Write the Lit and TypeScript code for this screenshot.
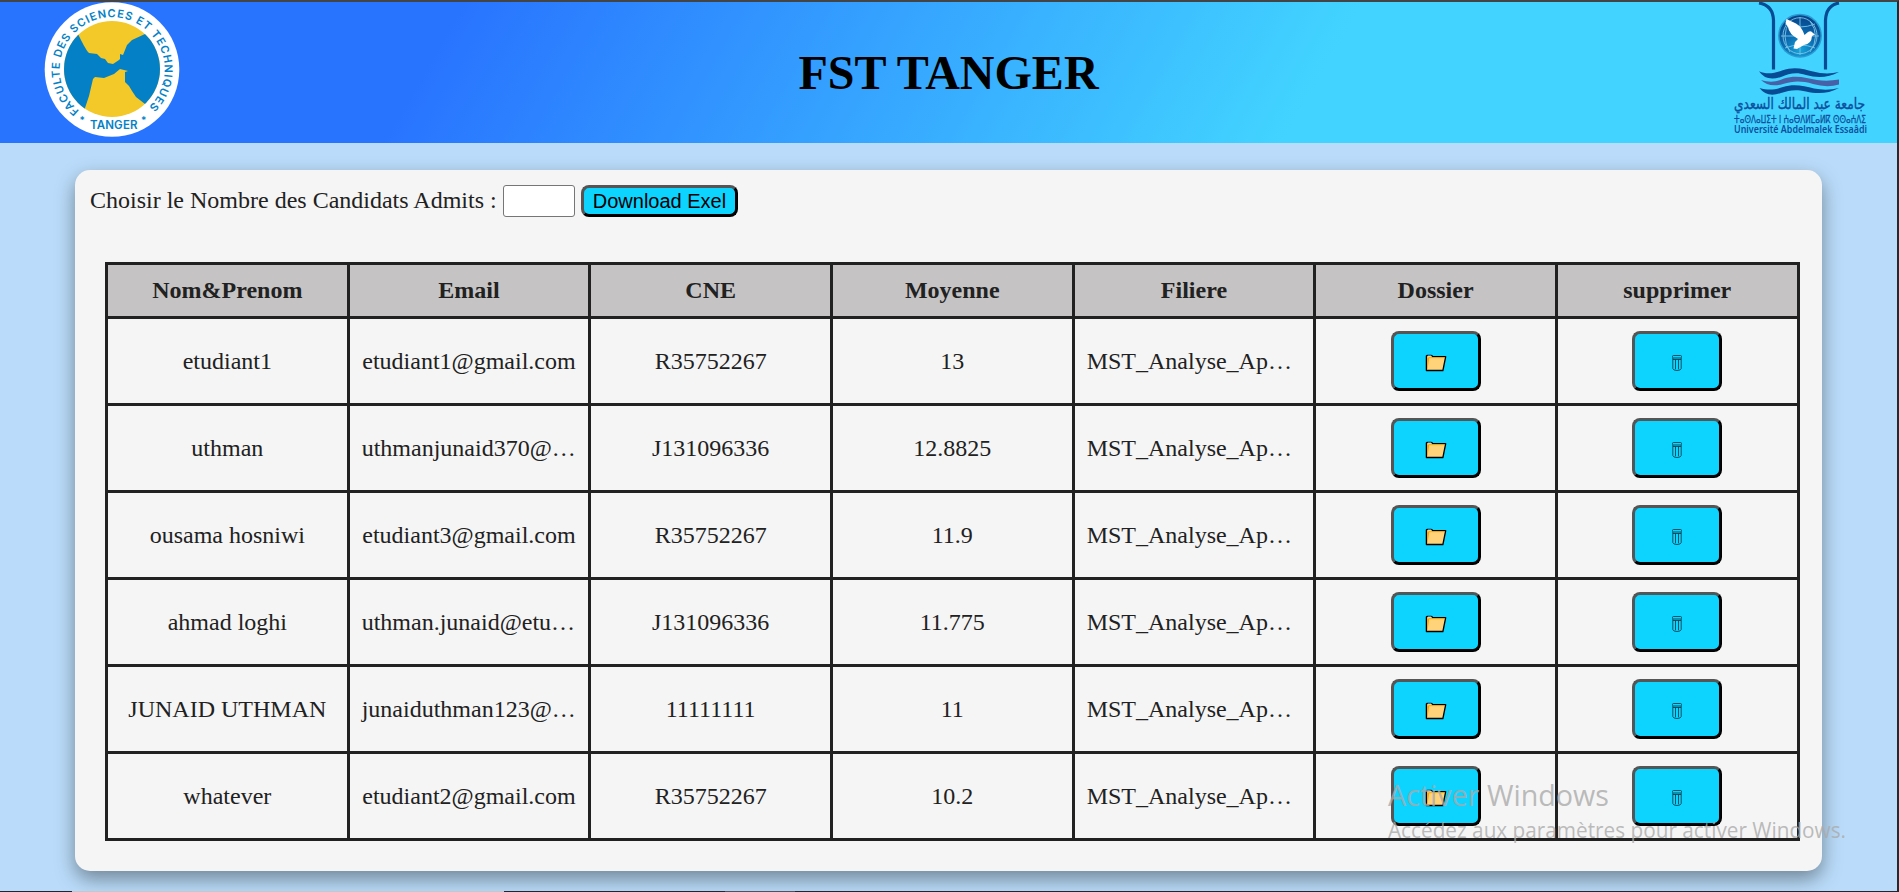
import { LitElement, html, css, svg } from "lit";
import { customElement } from "lit/decorators.js";

interface Candidate {
  name: string;
  email: string;
  cne: string;
  average: string;
  track: string;
}

const TRACK = "MST_Analyse_Appliquee";

const CANDIDATES: Candidate[] = [
  { name: "etudiant1", email: "etudiant1@gmail.com", cne: "R35752267", average: "13", track: TRACK },
  { name: "uthman", email: "uthmanjunaid370@gmail.com", cne: "J131096336", average: "12.8825", track: TRACK },
  { name: "ousama hosniwi", email: "etudiant3@gmail.com", cne: "R35752267", average: "11.9", track: TRACK },
  { name: "ahmad loghi", email: "uthman.junaid@etu.uae.ac.ma", cne: "J131096336", average: "11.775", track: TRACK },
  { name: "JUNAID UTHMAN", email: "junaiduthman123@gmail.com", cne: "11111111", average: "11", track: TRACK },
  { name: "whatever", email: "etudiant2@gmail.com", cne: "R35752267", average: "10.2", track: TRACK },
];

const COLUMNS = ["Nom&Prenom", "Email", "CNE", "Moyenne", "Filiere", "Dossier", "supprimer"];

const folderIcon = svg`
  <svg class="folder" width="22" height="18" viewBox="0 0 22 18">
    <path d="M1.400 16.500V2.400Q1.400 1.300 2.600 1.300H6.200Q7.300 1.300 7.600 2.700H20.700L17.900 16.500Z" fill="#ffd37a" stroke="#000" stroke-width="1.300" stroke-linejoin="round"/>
    <path d="M2.100 15V3.600H4.300L2.500 15.500Z" fill="#f9a602"/>
    <path d="M4 3.700h15.500" stroke="#f9a602" stroke-width=".9"/>
    <path d="M2.800 1.500h3.400" stroke="#1d78b8" stroke-width="1"/>
  </svg>`;

const trashIcon = svg`
  <svg class="trash" width="12" height="18" viewBox="0 0 12 18" fill="none" stroke="#06313c" stroke-width=".8">
    <rect x="1.500" y="1.500" width="9" height="2.500" rx="1"/>
    <path d="M1.800 4V14.500Q2.200 16.500 6 16.500T10.200 14.500V4M4.500 5.600V15.200M7.500 5.600V15.200M2 5.500H10"/>
  </svg>`;

@customElement("faculty-logo")
export class FacultyLogo extends LitElement {
  static styles = css`
    :host { display: block; width: 136px; height: 136px; }
    .ring { fill: #0481c6; font: 600 11px Inter, "Liberation Sans", sans-serif; }
    .star { fill: #0481c6; font: 600 10px Inter, "Liberation Sans", sans-serif; }
    .city { fill: #0481c6; font: 600 11.500px Inter, "Liberation Sans", sans-serif; }
  `;

  render() {
    return html`
      <svg width="136" height="136" viewBox="0 0 136 136">
        <defs>
          <clipPath id="disc"><circle cx="68" cy="67" r="48"/></clipPath>
          <path id="around" d="M35.300 108.600A52.500 52.500 0 1 1 105 105"/>
        </defs>
        <circle cx="68" cy="67.500" r="67.300" fill="#fff"/>
        <g clip-path="url(#disc)">
          <rect width="136" height="136" fill="#f2c928"/>
          <path d="M10 20L34 32C38 40 42 48 45 51L53 52L57 56L61 57L64 61L69 62L75 58L76 57V52L79 53L83 43L88 38L101 32L125 20V120L101 102L92 95L88 89L85 84L81 80V70L84 69L76 67L70 72L60 76L51 75L49 77L45 94L41 106L35 120L10 110Z" fill="#0481c6"/>
        </g>
        <text class="ring"><textPath href="#around" textLength="253">FACULTE DES SCIENCES ET TECHNIQUES</textPath></text>
        <text class="city" x="46" y="127" textLength="47.500">TANGER</text>
        <text class="star" x="35.500" y="122">*</text>
        <text class="star" x="97" y="122">*</text>
      </svg>`;
  }
}

@customElement("university-logo")
export class UniversityLogo extends LitElement {
  static styles = css`
    :host { display: block; width: 140px; height: 141px; }
    .arabic { fill: #0d4f9e; stroke: #0d4f9e; stroke-width: .4px; font: 400 15.500px "DejaVu Sans", sans-serif; }
    .tifinagh { fill: #0d4f9e; stroke: #0d4f9e; stroke-width: .3px; font: 400 11px "DejaVu Sans", sans-serif; }
    .latin { fill: #0d4f9e; font: 600 10.800px "Noto Sans", "Open Sans", sans-serif; }
  `;

  render() {
    return html`
      <svg width="140" height="141" viewBox="0 0 140 141">
        <defs>
          <radialGradient id="globe" cx=".5" cy=".85" r=".8">
            <stop offset="0" stop-color="#16a5dc"/>
            <stop offset=".5" stop-color="#0b6bb0"/>
            <stop offset="1" stop-color="#07468c"/>
          </radialGradient>
        </defs>
        <g fill="none" stroke="#064b94" stroke-width="3.200">
          <path d="M28 1C37 2.500 42 8 42.500 18V67.500"/>
          <path d="M108 1C100 2.500 95 8 94.500 18V67.500"/>
        </g>
        <circle cx="69" cy="33.700" r="22" fill="#2a9bd4"/>
        <circle cx="69" cy="33.700" r="20.500" fill="url(#globe)"/>
        <g fill="none" stroke="#7cc5e8" stroke-width=".9">
          <ellipse cx="69" cy="33.700" rx="17" ry="18"/>
          <path d="M69 15V53M50 34H88M54 22Q69 28 84 22M54 46Q69 40 84 46M59 19Q49 34 59 50M79 19Q90 34 79 50"/>
        </g>
        <path d="M55.500 17L65 21.500Q71 25 73.500 33L77 30Q80 28 82 31L84 32.500L81 34Q80.500 42 73 43L66 47L62.500 46.500L64 40L67 37Q58 32 57 25L54.500 21Z" fill="#fff"/>
        <path d="M28 69.300C36 73 44 71 51 68.500C63 64 73 67 82 69.500Q95 73 108 70C97 76 86 76 75 73C64 69.500 58 72 50 75Q35 80 28 69.300Z" fill="#064b94"/>
        <path d="M30 78C40 81 46 79.500 53 76.500C65 72.500 76 76 86 78Q97 79.500 108 77.500V82.500Q96 86 82 82C70 78.500 62 79 52 82Q38 86 30 78Z" fill="#4761a8"/>
        <path d="M28.500 86C37 88.500 44 88 52 85C63 81.500 73 84 83 86.500Q96 89 108 86C97 92 86 92 75 89.500C64 87 58 88.500 50 91Q36 96 28.500 86Z" fill="#064b94"/>
        <text class="arabic" x="68.500" y="107" text-anchor="middle" direction="rtl" textLength="131" lengthAdjust="spacingAndGlyphs">جامعة عبد المالك السعدي</text>
        <text class="tifinagh" x="3" y="120.500" textLength="132" lengthAdjust="spacingAndGlyphs">ⵜⴰⵙⴷⴰⵡⵉⵜ ⵏ ⵄⴰⴱⴷⵍⵎⴰⵍⴽ ⵙⵙⴰⵄⴷⵉ</text>
        <text class="latin" x="3" y="131" textLength="133" lengthAdjust="spacingAndGlyphs">Université Abdelmalek Essaâdi</text>
      </svg>`;
  }
}

@customElement("app-root")
export class AppRoot extends LitElement {
  static styles = css`
    :host {
      display: block;
      box-sizing: border-box;
      width: 1899px;
      height: 892px;
      overflow: hidden;
      position: relative;
      border-top: 2px solid #424446;
      border-right: 2px solid #26282b;
      background: #badcfa;
      color: #212121;
      font-family: "Liberation Serif", "Times New Roman", serif;
      font-size: 24px;
    }
    * { box-sizing: border-box; }
    .header {
      height: 141px;
      display: grid;
      grid-template-columns: 200px 1fr 200px;
      background: linear-gradient(120deg, #2974ff 23.500%, #42d4ff 69%);
    }
    .left { padding-left: 44px; }
    .right { padding-left: 34px; }
    .title {
      margin: 0;
      display: flex;
      align-items: center;
      justify-content: center;
      color: #000;
      font-size: 48px;
      font-weight: 700;
    }
    .card {
      width: 1747px;
      height: 701px;
      margin: 27px 0 0 75px;
      padding: 15px 22px 0 15px;
      border-radius: 15px;
      background: #f5f5f5;
      box-shadow: 0 8px 20px rgba(0, 0, 0, .4);
    }
    .form { display: flex; align-items: center; height: 32px; }
    .label { width: 413px; white-space: nowrap; line-height: 28px; padding-bottom: 2px; }
    .count {
      width: 72px;
      height: 32px;
      border: 1px solid #767676;
      border-radius: 3px;
      background: #fff;
      font: 20px "Liberation Sans", sans-serif;
    }
    .download {
      width: 157px;
      height: 32px;
      margin-left: 6px;
      padding: 0;
      font: 20px "Liberation Sans", Arial, sans-serif;
      color: #000;
    }
    .btn {
      border: 3px solid;
      border-color: #555 #000 #000 #555;
      border-radius: 8px;
      background: #0dd3ff;
    }
    .table {
      width: 1694.600px;
      margin: 45px 0 0 15px;
      border-collapse: collapse;
      table-layout: fixed;
    }
    .cell {
      height: 87px;
      border: 3px solid #212121;
      padding: 0 12px;
      text-align: center;
      white-space: nowrap;
      overflow: hidden;
      text-overflow: ellipsis;
    }
    .head { height: 54px; background: #c5c3c4; font-weight: 700; }
    .action {
      display: flex;
      align-items: center;
      justify-content: center;
      width: 90px;
      height: 60px;
      margin: 0 auto;
      padding: 4px 0 0;
    }
    .taskbar {
      position: absolute;
      left: 0;
      right: 0;
      bottom: 0;
      height: 1px;
      background: linear-gradient(90deg, #1b2733 72px, #c4c8cc 72px 504px, #1b2733 504px 725px, #4a545e 725px 795px, #1b2733 795px);
    }
    .notice { position: absolute; left: 1380px; top: 768px; pointer-events: none; }
    .notice-text { fill: #aaa; fill-opacity: .8; font-family: "Open Sans", "Noto Sans", sans-serif; }
    .big { font-size: 29px; }
    .small { font-size: 21px; }
  `;

  private renderRow(c: Candidate) {
    return html`
      <tr>
        <td class="cell">${c.name}</td>
        <td class="cell">${c.email}</td>
        <td class="cell">${c.cne}</td>
        <td class="cell">${c.average}</td>
        <td class="cell">${c.track}</td>
        <td class="cell"><button class="btn action" aria-label="Dossier">${folderIcon}</button></td>
        <td class="cell"><button class="btn action" aria-label="supprimer">${trashIcon}</button></td>
      </tr>`;
  }

  render() {
    return html`
      <header class="header">
        <div class="left"><faculty-logo></faculty-logo></div>
        <h1 class="title">FST TANGER</h1>
        <div class="right"><university-logo></university-logo></div>
      </header>
      <main class="card">
        <div class="form">
          <label class="label" for="count">Choisir le Nombre des Candidats Admits :</label>
          <input class="count" id="count" />
          <button class="btn download">Download Exel</button>
        </div>
        <table class="table">
          <thead><tr>${COLUMNS.map((c) => html`<th class="cell head">${c}</th>`)}</tr></thead>
          <tbody>${CANDIDATES.map((c) => this.renderRow(c))}</tbody>
        </table>
      </main>
      <svg class="notice" width="480" height="80">
        <text class="notice-text big" x="8" y="36" textLength="221" lengthAdjust="spacingAndGlyphs">Activer Windows</text>
        <text class="notice-text small" x="8" y="68" textLength="458" lengthAdjust="spacingAndGlyphs">Accédez aux paramètres pour activer Windows.</text>
      </svg>
      <div class="taskbar"></div>`;
  }
}
